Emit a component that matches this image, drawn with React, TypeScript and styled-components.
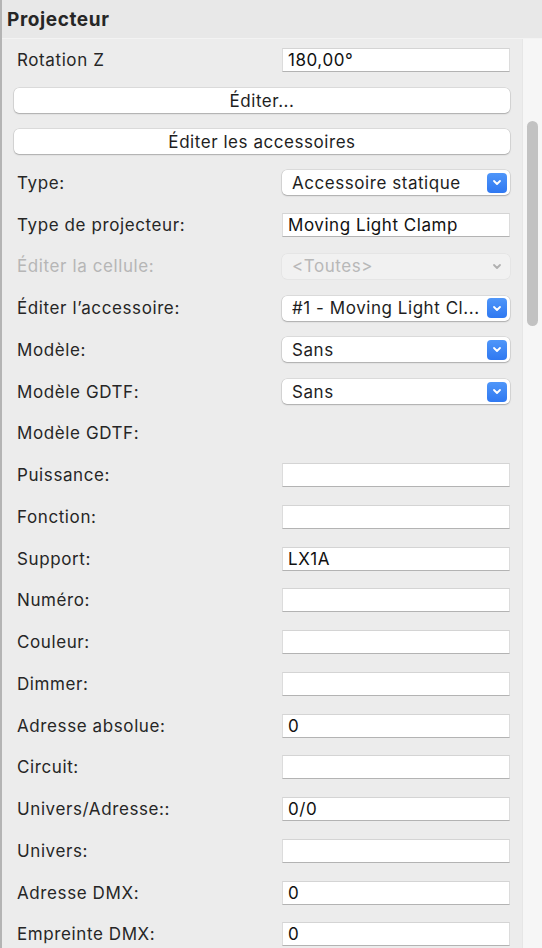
import React from "react"
import styled, { createGlobalStyle } from "styled-components"

const GlobalStyle = createGlobalStyle`
  html, body {
    margin: 0;
    padding: 0;
    background: #ececec;
  }
  body {
    font-family: "Inter", "Noto Sans", sans-serif;
    -webkit-font-smoothing: antialiased;
  }
`

const Window = styled.div`
  width: 542px;
  height: 948px;
  overflow: hidden;
  display: flex;
  flex-direction: column;
  border-left: 2px solid #b4b4b4;
  box-sizing: border-box;
  background: #ececec;
`

const Header = styled.div`
  height: 38px;
  flex: none;
  display: flex;
  align-items: center;
  padding-left: 5px;
  background: #e8e8e8;
  border-bottom: 1px solid #f3f3f3;
  font-size: 19px;
  font-weight: 700;
  color: #262626;
  letter-spacing: 0.6px;
`

const Body = styled.div`
  flex: 1;
  display: flex;
  min-height: 0;
`

const Content = styled.div`
  flex: 1;
  display: flex;
  flex-direction: column;
  padding: 0 12px;
  background: #ececec;
`

const ScrollTrack = styled.div`
  width: 19px;
  flex: none;
  background: #f6f6f6;
  border-left: 1px solid #e6e6e6;
  position: relative;
`

const ScrollThumb = styled.div`
  position: absolute;
  left: 4px;
  top: 82px;
  width: 11px;
  height: 205px;
  border-radius: 6px;
  background: #c2c2c2;
`

const Row = styled.div<{ $h?: number }>`
  height: ${(p) => p.$h ?? 41.75}px;
  flex: none;
  display: flex;
  align-items: center;
`

const Label = styled.div<{ $disabled?: boolean }>`
  width: 265px;
  padding-left: 3px;
  font-size: 17px;
  letter-spacing: 0.6px;
  color: ${(p) => (p.$disabled ? "#b6b6b6" : "#262626")};
  white-space: nowrap;
`

const TextField = styled.div`
  width: 228px;
  height: 24px;
  box-sizing: border-box;
  background: #fff;
  border: 1px solid #dcdcdc;
  border-top-color: #d4d4d4;
  border-bottom-color: #b3b3b3;
  display: flex;
  align-items: center;
  padding-left: 5px;
  font-size: 17px;
  letter-spacing: 0.55px;
  color: #111;
  white-space: nowrap;
`

const SelectBox = styled.div<{ $disabled?: boolean }>`
  width: 228px;
  height: 25px;
  box-sizing: border-box;
  border-radius: 5px;
  background: ${(p) => (p.$disabled ? "#f1f1f1" : "#fff")};
  box-shadow: ${(p) =>
    p.$disabled
      ? "0 0 0 0.5px rgba(0,0,0,0.06)"
      : "0 0 0 0.5px rgba(0,0,0,0.14), 0 1px 1.5px rgba(0,0,0,0.22)"};
  display: flex;
  align-items: center;
  justify-content: space-between;
  gap: 4px;
  padding: 0 3px 0 10px;
  font-size: 17px;
  letter-spacing: 0.55px;
  color: ${(p) => (p.$disabled ? "#b8b8b8" : "#1e1e1e")};
  white-space: nowrap;
`

const SelectText = styled.span`
  overflow: hidden;
`

const Stepper = styled.div<{ $disabled?: boolean }>`
  width: 20px;
  height: 20px;
  flex: none;
  border-radius: 4px;
  display: flex;
  align-items: center;
  justify-content: center;
  background: ${(p) =>
    p.$disabled ? "transparent" : "linear-gradient(#4f96f9, #2f78f1)"};
`

const PushButton = styled.div`
  width: 496px;
  height: 25px;
  box-sizing: border-box;
  border-radius: 5px;
  background: #fff;
  box-shadow: 0 0 0 0.5px rgba(0,0,0,0.14), 0 1px 1.5px rgba(0,0,0,0.22);
  display: flex;
  align-items: center;
  justify-content: center;
  font-size: 17px;
  letter-spacing: 0.55px;
  color: #1e1e1e;
`

const Chevron = ({ color }: { color: string }) => (
  <svg width="10" height="7" viewBox="0 0 10 7">
    <path d="M2 2 L5 5 L8 2" fill="none" stroke={color} strokeWidth="1.8" strokeLinecap="round" strokeLinejoin="round" />
  </svg>
)

type Field =
  | { label: string; kind: "text"; value?: string }
  | { label: string; kind: "select"; value: string; disabled?: boolean }
  | { label: string; kind: "none" }

const fields: Field[] = [
  { label: "Type:", kind: "select", value: "Accessoire statique" },
  { label: "Type de projecteur:", kind: "text", value: "Moving Light Clamp" },
  { label: "Éditer la cellule:", kind: "select", value: "<Toutes>", disabled: true },
  { label: "Éditer l’accessoire:", kind: "select", value: "#1 - Moving Light Cl..." },
  { label: "Modèle:", kind: "select", value: "Sans" },
  { label: "Modèle GDTF:", kind: "select", value: "Sans" },
  { label: "Modèle GDTF:", kind: "none" },
  { label: "Puissance:", kind: "text" },
  { label: "Fonction:", kind: "text" },
  { label: "Support:", kind: "text", value: "LX1A" },
  { label: "Numéro:", kind: "text" },
  { label: "Couleur:", kind: "text" },
  { label: "Dimmer:", kind: "text" },
  { label: "Adresse absolue:", kind: "text", value: "0" },
  { label: "Circuit:", kind: "text" },
  { label: "Univers/Adresse::", kind: "text", value: "0/0" },
  { label: "Univers:", kind: "text" },
  { label: "Adresse DMX:", kind: "text", value: "0" },
  { label: "Empreinte DMX:", kind: "text", value: "0" },
]

const renderField = (f: Field) => {
  if (f.kind === "text") return <TextField>{f.value}</TextField>
  if (f.kind === "select")
    return (
      <SelectBox $disabled={f.disabled}>
        <SelectText>{f.value}</SelectText>
        <Stepper $disabled={f.disabled}>
          <Chevron color={f.disabled ? "#b0b0b0" : "#fff"} />
        </Stepper>
      </SelectBox>
    )
  return null
}

export default function App() {
  return (
    <>
      <GlobalStyle />
      <Window>
        <Header>Projecteur</Header>
        <Body>
          <Content>
            <Row $h={41}>
              <Label>Rotation Z</Label>
              <TextField>180,00°</TextField>
            </Row>
            <Row $h={41}>
              <PushButton>Éditer...</PushButton>
            </Row>
            <Row $h={41}>
              <PushButton>Éditer les accessoires</PushButton>
            </Row>
            {fields.map((f, i) => (
              <Row key={i}>
                <Label $disabled={f.kind === "select" && f.disabled}>{f.label}</Label>
                {renderField(f)}
              </Row>
            ))}
          </Content>
          <ScrollTrack>
            <ScrollThumb />
          </ScrollTrack>
        </Body>
      </Window>
    </>
  )
}
